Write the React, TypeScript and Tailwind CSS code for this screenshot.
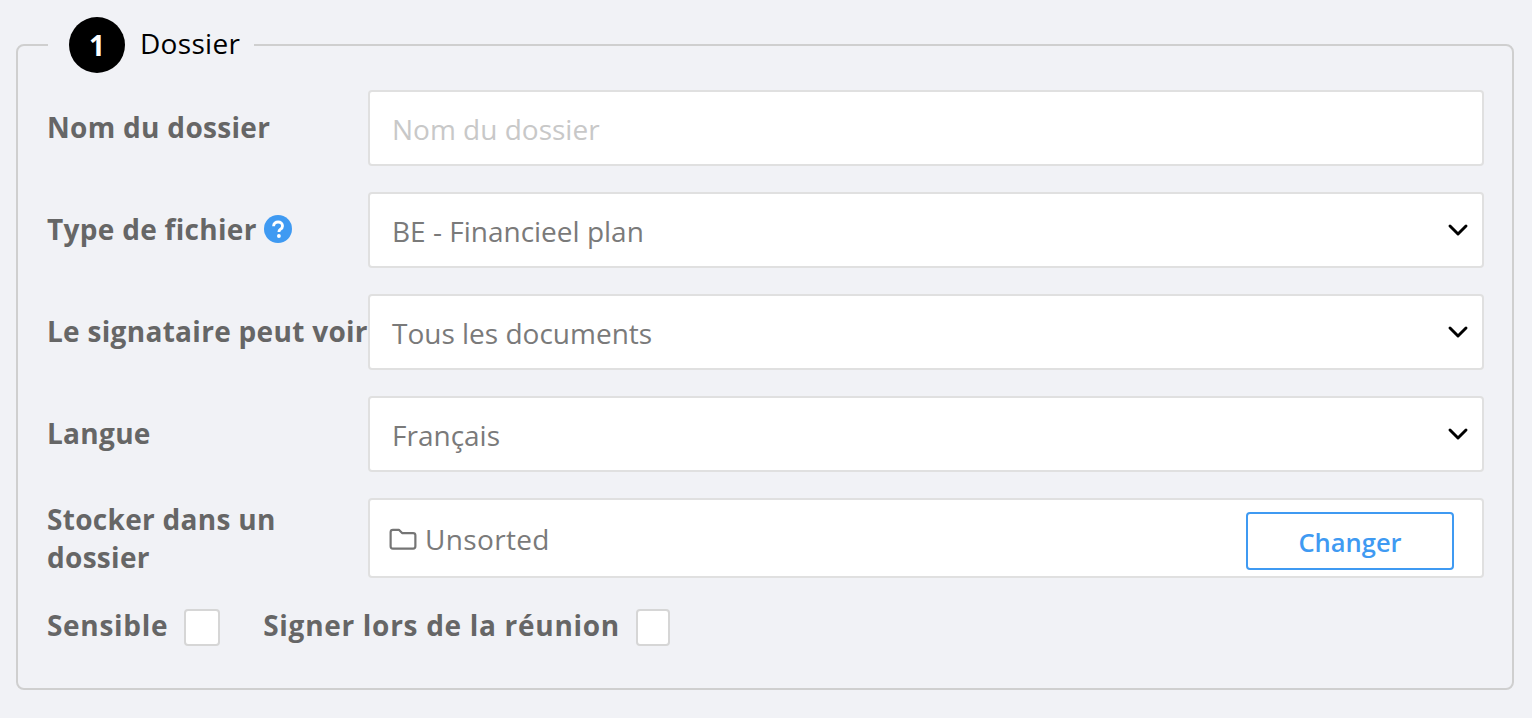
import { ChevronDown } from "lucide-react";

const labelCls = "w-[321px] shrink-0 text-[28px] leading-[38px] font-bold text-[#666666] whitespace-nowrap tracking-[0.3px]";
const boxCls = "flex-1 h-[76px] bg-white border-2 border-[#e0e0e0] rounded-[4px]";
const valueCls = "text-[28px] leading-[38px] mt-[2px]";
const bottomLabelCls = "text-[28px] leading-[38px] font-bold text-[#666666] tracking-[0.7px]";
const checkCls = "mt-[3px] h-[37px] bg-white border-2 border-[#d6d6d6] rounded-[4px]";

function SelectRow({ label, value, help }: { label: string; value: string; help?: boolean }) {
  return (
    <div className="flex items-start">
      <div className={`${labelCls} flex items-center pt-[18px] box-content h-[38px]`}>
        {label}
        {help && (
          <svg viewBox="0 0 28 28" className="w-[28px] h-[28px] ml-[7px]">
            <circle cx="14" cy="14" r="14" fill="#3f9af2" />
            <path d="M9.600 11.200c0-2.600 2-4.200 4.500-4.200 2.500 0 4.400 1.600 4.400 3.900 0 1.800-1 2.700-2.200 3.500-1 .7-1.300 1-1.300 2v.6" fill="none" stroke="#fff" strokeWidth="2.900" />
            <circle cx="14.900" cy="21" r="1.900" fill="#fff" />
          </svg>
        )}
      </div>
      <div className={`${boxCls} flex items-center justify-between pl-[22px] pr-[8px]`}>
        <span className={`${valueCls} text-[#7a7a7a]`}>{value}</span>
        <ChevronDown className="w-[32px] h-[32px] text-black" strokeWidth={2.2} />
      </div>
    </div>
  );
}

export default function App() {
  return (
    <div className="h-[718px] bg-[#f1f2f6] pl-4 pr-[18px] pt-[17px] overflow-hidden font-['Open_Sans',sans-serif]">
      <fieldset className="h-[673px] border-2 border-[#cfcfcf] rounded-[8px] pl-[29px] pr-[28px]">
        <legend className="ml-[1px] pl-[21px] pr-[14px] flex items-center h-[56px]">
          <span className="w-[56px] h-[56px] rounded-full bg-black text-white text-[28px] font-bold flex items-center justify-center">1</span>
          <span className="ml-[15px] text-[28px] leading-[38px] -mt-[4px] text-black tracking-[0.3px]">Dossier</span>
        </legend>
        <div className="flex flex-col gap-[26px] pt-[17px]">
          <div className="flex items-start">
            <div className={`${labelCls} pt-[18px]`}>Nom du dossier</div>
            <div className={`${boxCls} flex items-center pl-[22px]`}>
              <span className={`${valueCls} text-[#c8c8c8]`}>Nom du dossier</span>
            </div>
          </div>
          <SelectRow label="Type de fichier" value="BE - Financieel plan" help />
          <SelectRow label="Le signataire peut voir" value="Tous les documents" />
          <SelectRow label="Langue" value="Français" />
          <div className="flex items-start">
            <div className="w-[321px] shrink-0 text-[28px] leading-[38px] font-bold text-[#666666] tracking-[0.3px] pt-[2px] pr-[40px]">Stocker dans un dossier</div>
            <div className={`${boxCls} h-[80px] flex items-center justify-between pl-[19px] pr-[28px]`}>
              <div className="flex items-center gap-[8px] text-[#7a7a7a]">
                <svg viewBox="0 0 30 24" className="w-[28px] h-[22px] mt-[1px]" fill="none" stroke="#757575" strokeWidth="2.400" strokeLinejoin="round">
                  <path d="M1.500 20V4.500C1.500 3 2.500 2 4 2h6.500l3.500 3.500h12c1.500 0 2.500 1 2.500 2.500v12c0 1.500-1 2.500-2.500 2.500H4c-1.500 0-2.500-1-2.500-2.500z" />
                </svg>
                <span className="text-[28px] leading-[38px] mt-[2px] tracking-[0.35px]">Unsorted</span>
              </div>
              <button className="w-[208px] h-[58px] mt-[6px] pt-[2px] border-2 border-[#3f9af2] rounded-[4px] bg-white text-[#3f9af2] text-[25.5px] font-semibold">Changer</button>
            </div>
          </div>
          <div className="flex items-start mt-[2px]">
            <span className={bottomLabelCls}>Sensible</span>
            <span className={`${checkCls} ml-[16px] w-[36px]`} />
            <span className={`${bottomLabelCls} ml-[43px]`}>Signer lors de la réunion</span>
            <span className={`${checkCls} ml-[16px] w-[34px]`} />
          </div>
        </div>
      </fieldset>
    </div>
  );
}
